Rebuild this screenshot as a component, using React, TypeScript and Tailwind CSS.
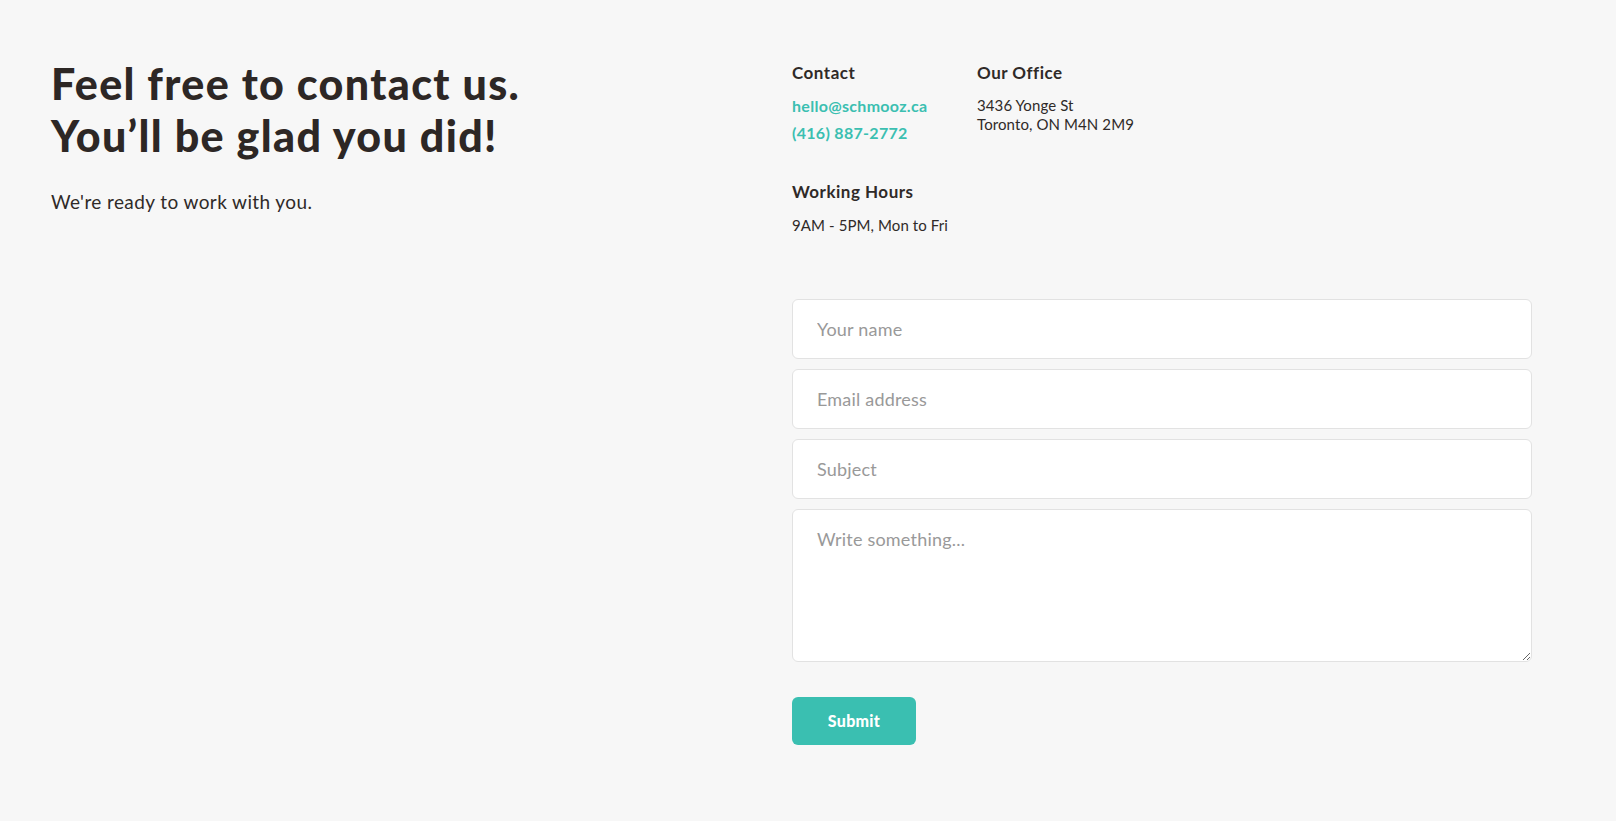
import { useState } from "react";

const FONT = { fontFamily: "Lato, 'Noto Sans', sans-serif" };

export default function App() {
  const [form, setForm] = useState({ name: "", email: "", subject: "", message: "" });

  const field =
    "w-full h-[60px] bg-white border border-[#e2e2e2] rounded-md px-6 text-[18px] tracking-[0.2px] text-[#2f2a28] placeholder:text-[#999999] outline-none";

  return (
    <div className="min-h-screen bg-[#f7f7f7] text-[#2f2a28]" style={FONT}>
      <div className="grid grid-cols-[741px_740px] pl-[51px] pt-[58px] pb-[76px]">
        {/* Left intro */}
        <div>
          <h1 className="text-[43px] leading-[52px] font-black tracking-[1.35px] text-[#2d2725]">
            Feel free to contact us.
            <br />
            You’ll be glad you did!
          </h1>
          <p className="mt-[27px] text-[19px] leading-[26px] tracking-[0.4px]">We're ready to work with you.</p>
        </div>

        {/* Right: info + form */}
        <div className="mt-[3px]">
          <div className="grid grid-cols-[185px_1fr]">
            <div>
              <h3 className="text-[17px] leading-[24px] font-bold tracking-[0.5px]">Contact</h3>
              <div className="mt-[10px] flex flex-col gap-[5px] text-[16px] leading-[22px] font-bold tracking-[0.3px] text-[#3bbfb1]">
                <a href="#">hello@schmooz.ca</a>
                <a href="#">(416) 887-2772</a>
              </div>
            </div>
            <div>
              <h3 className="text-[17px] leading-[24px] font-bold tracking-[0.5px]">Our Office</h3>
              <p className="mt-[11px] text-[15px] leading-[19px] tracking-[0.1px]">
                3436 Yonge St
                <br />
                Toronto, ON M4N 2M9
              </p>
            </div>
          </div>

          <div className="mt-[36px]">
            <h3 className="text-[17px] leading-[24px] font-bold tracking-[0.5px]">Working Hours</h3>
            <p className="mt-[10px] text-[15px] leading-[22px] tracking-[0.1px]">9AM - 5PM, Mon to Fri</p>
          </div>

          <form className="mt-[63px] flex flex-col gap-[10px]" onSubmit={(e) => e.preventDefault()}>
            <input
              className={field}
              placeholder="Your name"
              value={form.name}
              onChange={(e) => setForm({ ...form, name: e.target.value })}
            />
            <input
              className={field}
              placeholder="Email address"
              value={form.email}
              onChange={(e) => setForm({ ...form, email: e.target.value })}
            />
            <input
              className={field}
              placeholder="Subject"
              value={form.subject}
              onChange={(e) => setForm({ ...form, subject: e.target.value })}
            />
            <textarea
              className="w-full h-[153px] bg-white border border-[#e2e2e2] rounded-md px-6 py-[17px] text-[18px] tracking-[0.2px] leading-[24px] text-[#2f2a28] placeholder:text-[#999999] outline-none"
              placeholder="Write something..."
              value={form.message}
              onChange={(e) => setForm({ ...form, message: e.target.value })}
            />
            <div className="mt-[25px]">
              <button
                type="submit"
                className="w-[124px] h-[48px] rounded-md bg-[#3abfb1] text-white text-[16px] font-black tracking-[0.3px]"
              >
                Submit
              </button>
            </div>
          </form>
        </div>
      </div>
    </div>
  );
}
